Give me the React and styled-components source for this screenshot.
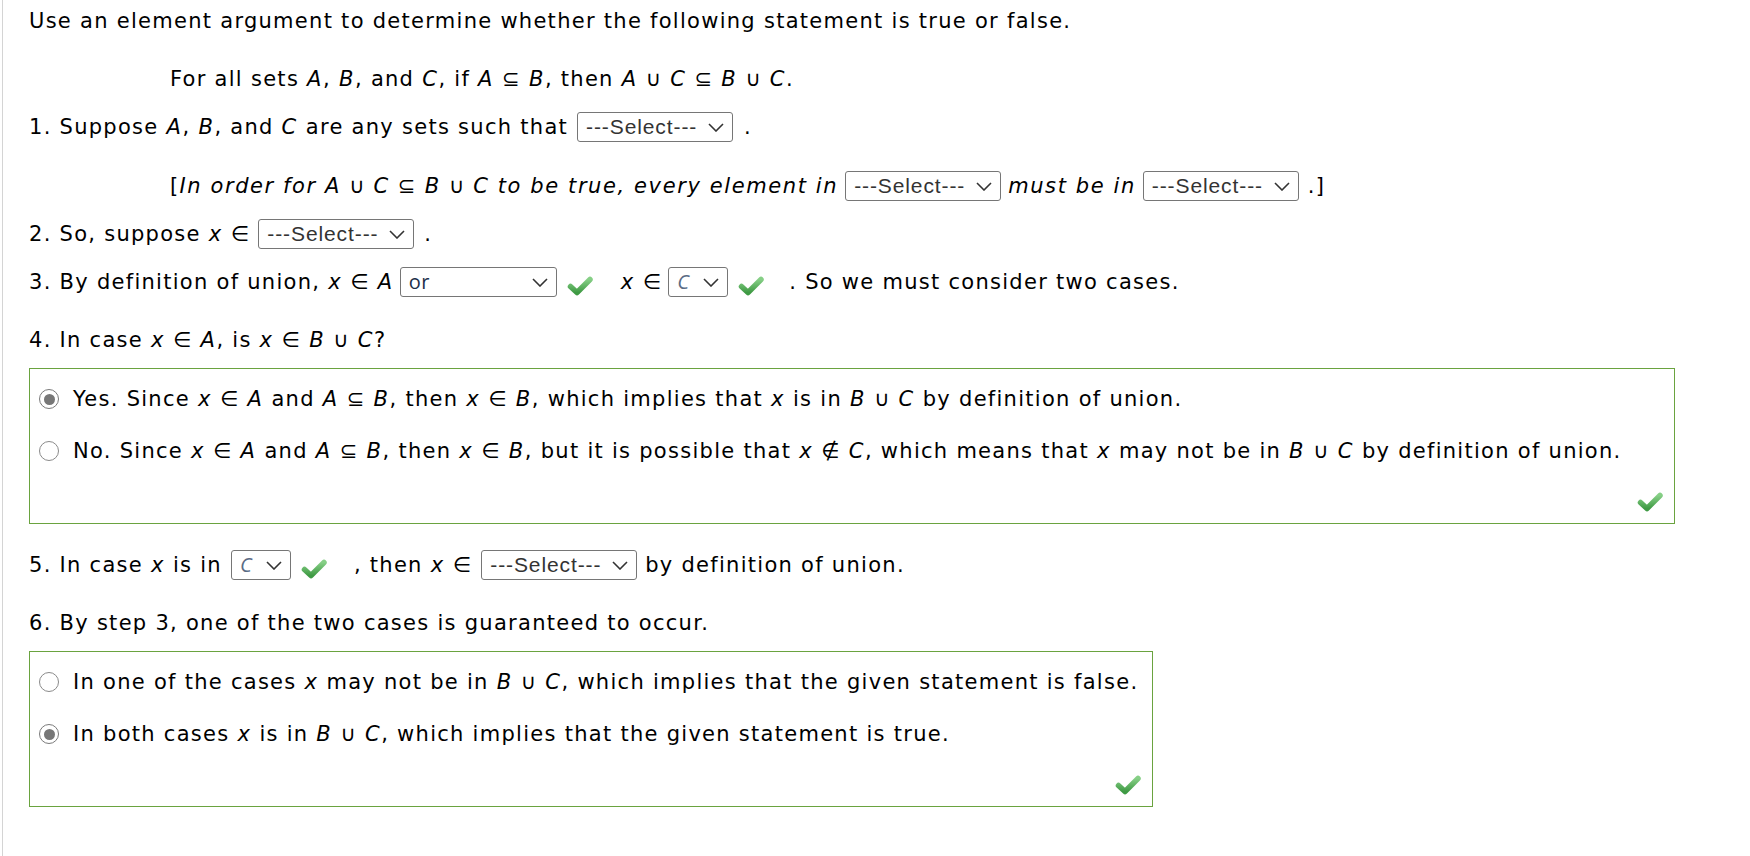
import React from "react";
import styled, { createGlobalStyle } from "styled-components";

const Global = createGlobalStyle`
  html, body { margin: 0; padding: 0; background: #fff; }
  body {
    font-family: "DejaVu Sans", Verdana, sans-serif;
    font-size: 21px;
    letter-spacing: 1.28px;
    color: #000;
  }
`;

const Page = styled.div`
  margin-left: 2px;
  border-left: 1px solid #d4d4d4;
  padding-left: 26px;
  min-height: 856px;
  box-sizing: border-box;
  overflow: hidden;
`;

const Row = styled.div`
  height: 30px;
  line-height: 30px;
  white-space: nowrap;
  margin-top: ${(p) => p.$mt}px;
  padding-left: ${(p) => (p.$indent ? 141 : 0)}px;
`;

const I = styled.i`
  font-style: italic;
  letter-spacing: 1.6px;
`;

const SelectBox = styled.span`
  display: inline-flex;
  align-items: center;
  justify-content: space-between;
  box-sizing: border-box;
  width: ${(p) => p.$w}px;
  height: 30px;
  border: 1px solid #767676;
  border-radius: 3px;
  padding: 0 8px 0 8px;
  vertical-align: middle;
  margin: -2px ${(p) => p.$mr ?? 8}px 0 ${(p) => p.$ml ?? 8}px;
  background: #fff;
  line-height: 28px;
  letter-spacing: 0;
`;

const SelectText = styled.span`
  font-family: ${(p) => (p.$open ? '"Open Sans", sans-serif' : '"Liberation Sans", Arial, sans-serif')};
  font-size: ${(p) => (p.$open ? 20 : 21)}px;
  letter-spacing: ${(p) => (p.$open ? 0.6 : 0.9)}px;
  font-style: ${(p) => (p.$italic ? "italic" : "normal")};
  color: ${(p) => p.$color || "#333"};
`;

const Chevron = () => (
  <svg width="16" height="9" viewBox="0 0 16 9" style={{ flex: "none" }}>
    <path d="M1 1 L8 8 L15 1" fill="none" stroke="#333" strokeWidth="1.6" />
  </svg>
);

const Select = ({ w, children, open, italic, color, ml, mr }) => (
  <SelectBox $w={w} $ml={ml} $mr={mr}>
    <SelectText $open={open} $italic={italic} $color={color}>
      {children}
    </SelectText>
    <Chevron />
  </SelectBox>
);

const CheckWrap = styled.span`
  display: inline-block;
  vertical-align: middle;
  width: 28px;
  height: 23px;
  margin: 4px ${(p) => p.$mr ?? 0}px 0 ${(p) => p.$ml ?? 0}px;
  line-height: 0;
`;

let gid = 0;
const Check = ({ ml, mr }) => {
  const id = `g${gid++}`;
  return (
    <CheckWrap $ml={ml} $mr={mr}>
      <svg width="28" height="23" viewBox="0 0 28 23">
        <defs>
          <linearGradient id={id} x1="0" y1="0" x2="0" y2="1">
            <stop offset="0" stopColor="#86cf86" />
            <stop offset="1" stopColor="#3f9a44" />
          </linearGradient>
        </defs>
        <path
          d="M4.5 12.5 L11 18.5 L24 5.5"
          fill="none"
          stroke={`url(#${id})`}
          strokeWidth="5.5"
          strokeLinecap="round"
          strokeLinejoin="round"
        />
      </svg>
    </CheckWrap>
  );
};

const AnswerBox = styled.div`
  box-sizing: border-box;
  width: ${(p) => p.$w}px;
  height: 156px;
  margin-top: 13px;
  border: 1px solid #6aa33f;
  padding: 15px 10px 0 8px;
`;

const Option = styled.div`
  display: flex;
  align-items: center;
  height: 30px;
  white-space: nowrap;
  margin-bottom: 22px;
`;

const Radio = styled.span`
  flex: none;
  box-sizing: border-box;
  width: 20px;
  height: 20px;
  border-radius: 50%;
  border: 1.6px solid ${(p) => (p.$checked ? "#7a7a7a" : "#8a8a8a")};
  margin-right: 14px;
  margin-left: 1px;
  display: flex;
  align-items: center;
  justify-content: center;
  &::after {
    content: "";
    display: ${(p) => (p.$checked ? "block" : "none")};
    width: 11px;
    height: 11px;
    border-radius: 50%;
    background: #777;
  }
`;

const OptionText = styled.span`
  line-height: 30px;
`;

const BoxFoot = styled.div`
  display: flex;
  justify-content: flex-end;
  margin-top: -2px;
`;

export default function App() {
  return (
    <>
      <Global />
      <Page>
        <Row $mt={6}>Use an element argument to determine whether the following statement is true or false.</Row>
        <Row $mt={28} $indent>
          For all sets <I>A</I>, <I>B</I>, and <I>C</I>, if <I>A</I> ⊆ <I>B</I>, then <I>A</I> ∪ <I>C</I> ⊆ <I>B</I> ∪ <I>C</I>.
        </Row>
        <Row $mt={18}>
          1. Suppose <I>A</I>, <I>B</I>, and <I>C</I> are any sets such that
          <Select w={156} ml={9} mr={11}>---Select---</Select>.
        </Row>
        <Row $mt={29} $indent>
          [<I>In order for A</I> ∪ <I>C</I> ⊆ <I>B</I> ∪ <I>C to be true, every element in</I>
          <Select w={156} ml={7} mr={7}>---Select---</Select>
          <I>must be in</I>
          <Select w={156} ml={7} mr={9}>---Select---</Select>.]
        </Row>
        <Row $mt={18}>
          2. So, suppose <I>x</I> ∈<Select w={156} ml={8} mr={10}>---Select---</Select>.
        </Row>
        <Row $mt={18}>
          3. By definition of union, <I>x</I> ∈ <I>A</I>
          <Select w={157} open color="#1c2f4a" ml={6} mr={6}>or</Select>
          <Check ml={3} mr={27} />
          <I>x</I> ∈
          <Select w={60} open italic color="#5a6b85" ml={6} mr={6}>C</Select>
          <Check ml={3} mr={24} />
          . So we must consider two cases.
        </Row>
        <Row $mt={28}>
          4. In case <I>x</I> ∈ <I>A</I>, is <I>x</I> ∈ <I>B</I> ∪ <I>C</I>?
        </Row>
        <AnswerBox $w={1646}>
          <Option>
            <Radio $checked />
            <OptionText>
              Yes. Since <I>x</I> ∈ <I>A</I> and <I>A</I> ⊆ <I>B</I>, then <I>x</I> ∈ <I>B</I>, which implies that <I>x</I> is in <I>B</I> ∪ <I>C</I> by definition of union.
            </OptionText>
          </Option>
          <Option>
            <Radio />
            <OptionText>
              No. Since <I>x</I> ∈ <I>A</I> and <I>A</I> ⊆ <I>B</I>, then <I>x</I> ∈ <I>B</I>, but it is possible that <I>x</I> ∉ <I>C</I>, which means that <I>x</I> may not be in <I>B</I> ∪ <I>C</I> by definition of union.
            </OptionText>
          </Option>
          <BoxFoot>
            <Check />
          </BoxFoot>
        </AnswerBox>
        <Row $mt={26}>
          5. In case <I>x</I> is in
          <Select w={60} open italic color="#5a6b85" ml={9} mr={6}>C</Select>
          <Check ml={3} mr={26} />
          , then <I>x</I> ∈<Select w={156} ml={9} mr={8}>---Select---</Select>by definition of union.
        </Row>
        <Row $mt={28}>6. By step 3, one of the two cases is guaranteed to occur.</Row>
        <AnswerBox $w={1124}>
          <Option>
            <Radio />
            <OptionText>
              In one of the cases <I>x</I> may not be in <I>B</I> ∪ <I>C</I>, which implies that the given statement is false.
            </OptionText>
          </Option>
          <Option>
            <Radio $checked />
            <OptionText>
              In both cases <I>x</I> is in <I>B</I> ∪ <I>C</I>, which implies that the given statement is true.
            </OptionText>
          </Option>
          <BoxFoot>
            <Check />
          </BoxFoot>
        </AnswerBox>
      </Page>
    </>
  );
}
